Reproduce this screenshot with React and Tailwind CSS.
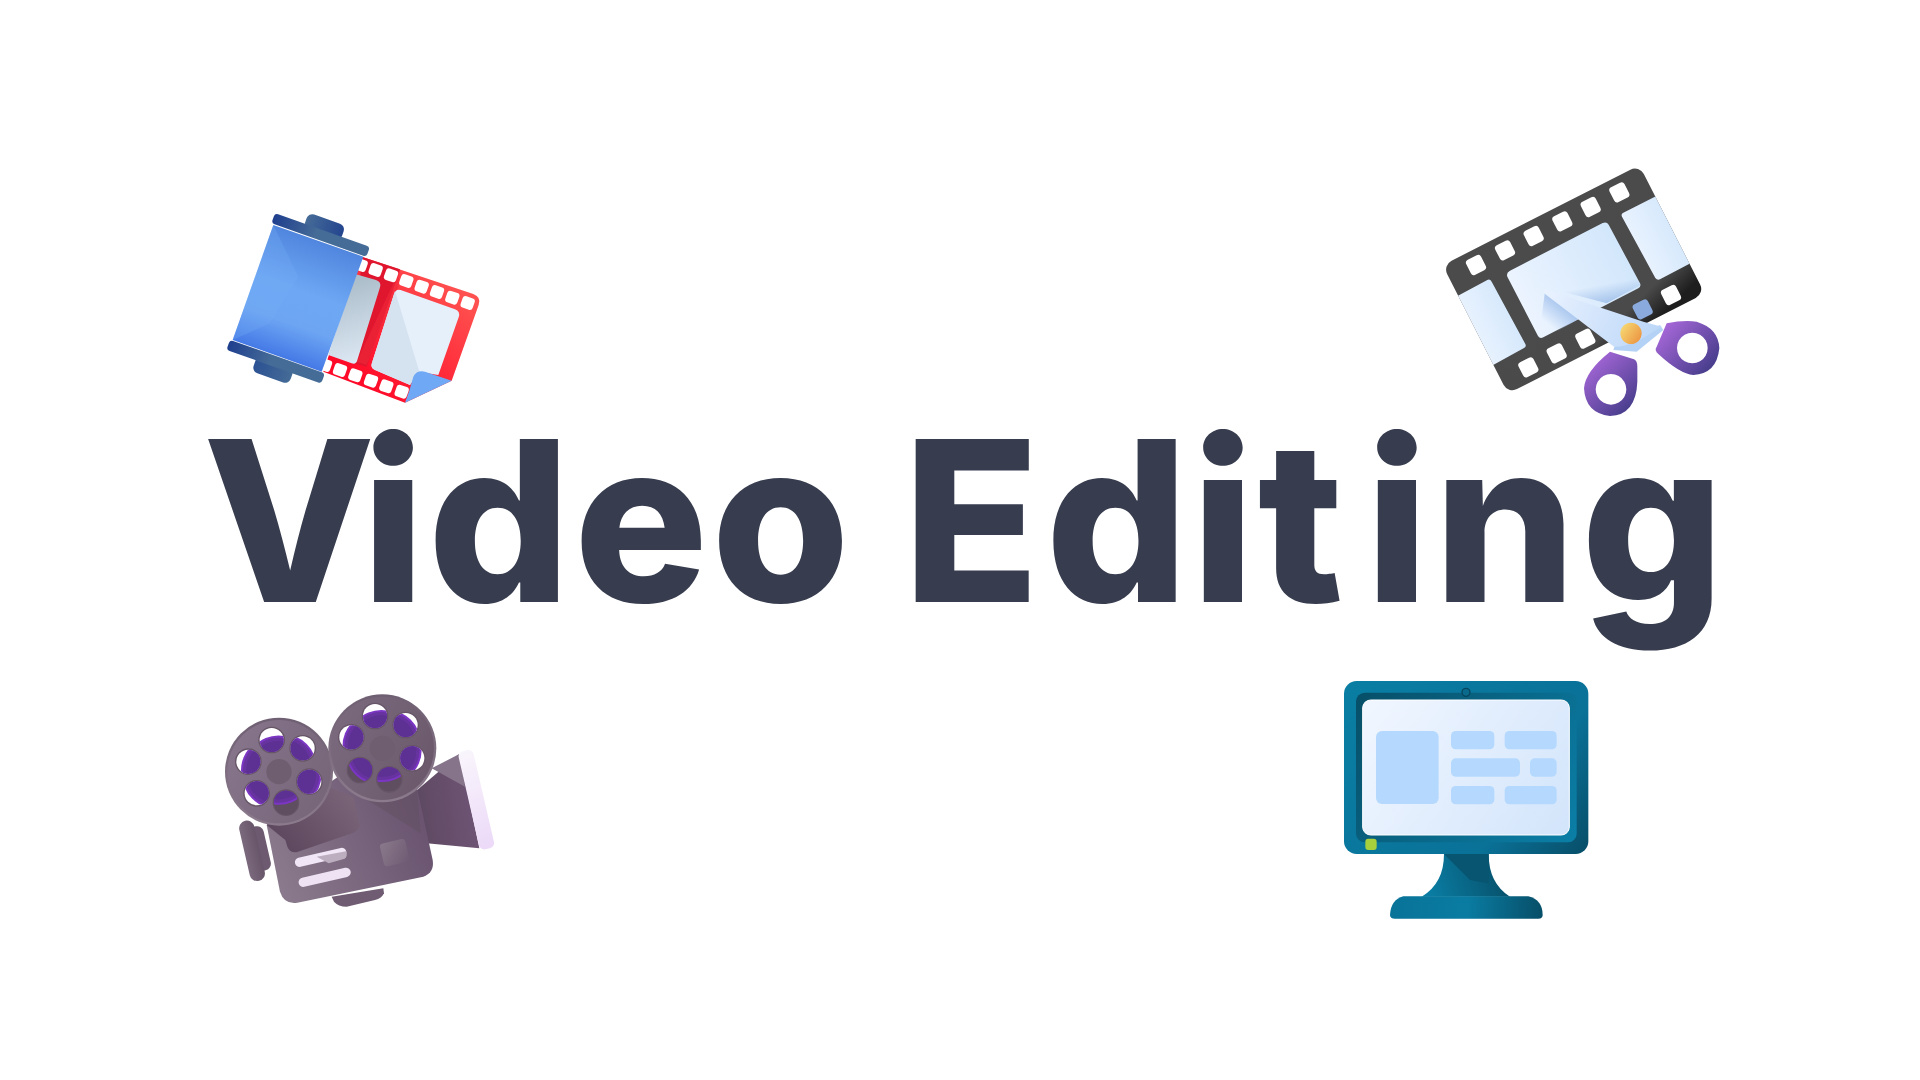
import React from 'react';

// the film roll, top left
function FilmRoll() {
  const topHoles = [[497, 240], [543, 256], [589, 273], [635, 290], [681, 306], [727, 323], [773, 339], [452, 225]];
  const bottomHoles = [[345, 525], [390, 540], [436, 556], [483, 572], [529, 589], [575, 605]];
  return (
    <svg viewBox="0 0 870 690" className="w-[290px] h-[230px] shrink-0">
      <defs>
        <linearGradient id="rollRed" x1="780" y1="320" x2="500" y2="620" gradientUnits="userSpaceOnUse">
          <stop offset="0" stopColor="#ff5250" />
          <stop offset="1" stopColor="#ff0a28" />
        </linearGradient>
        <linearGradient id="rollBody" x1="330" y1="145" x2="205" y2="500" gradientUnits="userSpaceOnUse">
          <stop offset="0" stopColor="#4f84dd" />
          <stop offset="0.45" stopColor="#6ea8f4" />
          <stop offset="0.72" stopColor="#6da5f3" />
          <stop offset="1" stopColor="#4479e6" />
        </linearGradient>
        <linearGradient id="rollCap" x1="0" y1="0" x2="1" y2="0">
          <stop offset="0" stopColor="#1f3f8e" />
          <stop offset="0.45" stopColor="#456b97" />
          <stop offset="1" stopColor="#456b97" />
        </linearGradient>
        <linearGradient id="rollKnob" x1="0" y1="0" x2="1" y2="0">
          <stop offset="0" stopColor="#456b97" />
          <stop offset="1" stopColor="#24458f" />
        </linearGradient>
        <linearGradient id="rollKnob2" x1="0" y1="0" x2="1" y2="0">
          <stop offset="0" stopColor="#2b5193" />
          <stop offset="1" stopColor="#456b97" />
        </linearGradient>
        <linearGradient id="rollLeftFrame" x1="400" y1="290" x2="470" y2="500" gradientUnits="userSpaceOnUse">
          <stop offset="0" stopColor="#aebfcc" />
          <stop offset="1" stopColor="#dbe7f3" />
        </linearGradient>
      </defs>
      <path d="M455 200 L790 312 Q815 322 806 345 L725 572 L585 638 L340 545 Z" fill="url(#rollRed)" />
      <path d="M455 200 L570 238 L470 530 L432 520 Z" fill="#e0162f" />
      <path d="M570 238 L565 290 L470 525 L440 515 Z" fill="#f0283a" opacity="0.6" />
      <path d="M435 252 L498 270 Q515 276 510 292 L442 510 Q438 525 425 520 L355 495 Z" fill="url(#rollLeftFrame)" />
      <path d="M572 300 L735 358 Q752 364 746 382 L685 555 L625 545 L600 585 L495 540 Q480 532 486 518 L552 312 Q558 296 572 300 Z" fill="#e6f0fb" />
      <path d="M555 303 L628 545 L600 585 L495 540 Q480 532 486 518 Z" fill="#d5e2f0" />
      {topHoles.concat(bottomHoles).map(([x, y]) => (
        <rect key={`${x}-${y}`} x={x - 19} y={y - 18} width="38" height="36" rx="9" fill="#fff" transform={`rotate(19.5 ${x} ${y})`} />
      ))}
      <path d="M585 638 Q600 600 610 560 Q620 540 645 545 L725 572 Z" fill="#6fa8f5" />
      <rect x="284" y="86" width="118" height="50" rx="18" fill="url(#rollKnob)" transform="rotate(19.5 343 111)" />
      <rect x="130" y="515" width="118" height="50" rx="18" fill="url(#rollKnob2)" transform="rotate(19.5 189 540)" />
      <path d="M190 105 L460 200 L335 545 L68 450 Z" fill="url(#rollBody)" />
      <path d="M190 105 L265 260 L180 400 L68 450 Z" fill="#75adf6" opacity="0.3" />
      <rect x="181" y="119" width="302" height="32" rx="10" fill="url(#rollCap)" transform="rotate(19.5 332 135)" />
      <rect x="46" y="499" width="302" height="32" rx="10" fill="url(#rollCap)" transform="rotate(19.5 197 515)" />
    </svg>
  );
}

// film strip with the scissors across it, top right
function FilmCut() {
  const holes = [[138, 345], [225, 301], [311, 258], [397, 214], [482, 171], [568, 127], [295, 652], [380, 610], [466, 566], [723, 435]];
  return (
    <svg viewBox="0 0 900 810" className="w-[300px] h-[270px] shrink-0">
      <defs>
        <clipPath id="cutClip">
          <rect x="100" y="172" width="662" height="432" rx="30" transform="rotate(-27 431 388)" />
        </clipPath>
        <linearGradient id="cutStrip" x1="380" y1="250" x2="500" y2="640" gradientUnits="userSpaceOnUse">
          <stop offset="0" stopColor="#4b4b4b" />
          <stop offset="0.8" stopColor="#4a4a4a" />
          <stop offset="1" stopColor="#1e1e1e" />
        </linearGradient>
        <linearGradient id="cutFrame" x1="240" y1="480" x2="620" y2="280" gradientUnits="userSpaceOnUse">
          <stop offset="0" stopColor="#eef5ff" />
          <stop offset="1" stopColor="#cfe5fb" />
        </linearGradient>
        <linearGradient id="cutSide" x1="100" y1="560" x2="280" y2="470" gradientUnits="userSpaceOnUse">
          <stop offset="0" stopColor="#eef5ff" />
          <stop offset="1" stopColor="#cfe5fb" />
        </linearGradient>
        <linearGradient id="cutSide2" x1="590" y1="300" x2="770" y2="210" gradientUnits="userSpaceOnUse">
          <stop offset="0" stopColor="#eef5ff" />
          <stop offset="1" stopColor="#cfe5fb" />
        </linearGradient>
        <linearGradient id="cutShade" x1="510" y1="405" x2="522" y2="470" gradientUnits="userSpaceOnUse">
          <stop offset="0" stopColor="#9dbde8" stopOpacity="0" />
          <stop offset="1" stopColor="#9dbde8" />
        </linearGradient>
        <linearGradient id="cutShade2" x1="440" y1="500" x2="395" y2="555" gradientUnits="userSpaceOnUse">
          <stop offset="0" stopColor="#a9c6ee" />
          <stop offset="1" stopColor="#a9c6ee" stopOpacity="0" />
        </linearGradient>
        <linearGradient id="cutBlade" x1="340" y1="420" x2="680" y2="560" gradientUnits="userSpaceOnUse">
          <stop offset="0" stopColor="#eaf2ff" />
          <stop offset="1" stopColor="#bcd7f8" />
        </linearGradient>
        <linearGradient id="cutHandle" x1="700" y1="530" x2="850" y2="670" gradientUnits="userSpaceOnUse">
          <stop offset="0" stopColor="#a667d8" />
          <stop offset="1" stopColor="#403a86" />
        </linearGradient>
        <linearGradient id="cutHandle2" x1="470" y1="640" x2="610" y2="790" gradientUnits="userSpaceOnUse">
          <stop offset="0" stopColor="#a667d8" />
          <stop offset="1" stopColor="#403a86" />
        </linearGradient>
        <linearGradient id="cutPin" x1="575" y1="530" x2="635" y2="570" gradientUnits="userSpaceOnUse">
          <stop offset="0" stopColor="#f6d771" />
          <stop offset="1" stopColor="#ec9340" />
        </linearGradient>
      </defs>
      <rect x="100" y="172" width="662" height="432" rx="30" fill="url(#cutStrip)" transform="rotate(-27 431 388)" />
      <g clipPath="url(#cutClip)">
        <path d="M70 445 L172 390 Q180 386 185 395 L286 582 Q290 590 282 594 L180 650 Z" fill="url(#cutSide)" />
        <path d="M685 135 L790 335 L690 388 Q682 392 676 384 L576 200 Q572 192 580 188 Z" fill="url(#cutSide2)" />
      </g>
      <path d="M240 362 L518 219 Q530 214 536 224 L630 400 Q634 410 625 415 L340 562 Q330 568 324 558 L232 380 Q228 368 240 362 Z" fill="url(#cutFrame)" />
      <path d="M400 425 L622 385 L632 405 L530 460 Z" fill="url(#cutShade)" />
      <path d="M345 425 L450 505 L350 562 L330 535 Z" fill="url(#cutShade2)" />
      {holes.map(([x, y]) => (
        <rect key={`${x}-${y}`} x={x - 25} y={y - 25} width="50" height="50" rx="10" fill="#fff" transform={`rotate(-27 ${x} ${y})`} />
      ))}
      <rect x="613" y="453" width="50" height="50" rx="10" fill="#8aa9dc" transform="rotate(-27 638 478)" />
      <path d="M555 585 L690 525 L700 540 L620 605 L550 600 Z" fill="#b4d2f5" />
      <path d="M345 418 Q336 422 345 432 L552 590 Q575 592 620 575 L695 530 L640 515 Z" fill="url(#cutBlade)" />
      <circle cx="603" cy="550" r="32" fill="url(#cutPin)" />
      <path fillRule="evenodd" d="M710 520 Q760 510 800 515 Q866 535 868 595 Q860 672 790 675 Q750 672 685 612 Q672 600 680 590 Z M787 548 a46 46 0 1 0 0.01 0 Z" fill="url(#cutHandle)" />
      <path fillRule="evenodd" d="M540 605 L612 628 Q622 632 622 650 L622 695 Q618 795 540 798 Q466 790 462 715 Q465 665 540 605 Z M543 672 a46 46 0 1 0 0.01 0 Z" fill="url(#cutHandle2)" />
    </svg>
  );
}

// holes are [x, y, how far the film disc stops short of the hole's outer edge, background]
function Reel({ id, cx, cy, holes }) {
  return (
    <g>
      <circle cx={cx} cy={cy} r="162" fill="url(#camReelEdge)" />
      <circle cx={cx} cy={cy} r="155" fill="url(#camReel)" />
      {holes.map(([x, y, inset, bg], i) => {
        const dist = Math.hypot(cx - x, cy - y);
        const shift = 100 - 36 + inset;
        const discX = x + ((cx - x) / dist) * shift;
        const discY = y + ((cy - y) / dist) * shift;
        return (
          <g key={x}>
            <circle cx={x} cy={y} r="40" fill="#665566" />
            <clipPath id={`${id}${i}`}><circle cx={x} cy={y} r="36" /></clipPath>
            <g clipPath={`url(#${id}${i})`}>
              <rect x={x - 40} y={y - 40} width="80" height="80" fill={bg} />
              <circle cx={discX} cy={discY} r="100" fill="#7c36c4" />
              <circle cx={discX} cy={discY} r="94" fill="#66339f" />
              <circle cx={discX} cy={discY} r="84" fill="#5d3093" />
            </g>
          </g>
        );
      })}
      <circle cx={cx} cy={cy} r="38" fill="#6f5e70" />
    </g>
  );
}

// the old cine camera, bottom left
function CineCamera() {
  const leftHoles = [
    [185, 180, 25, '#fff'], [278, 205, 18, '#fff'], [298, 305, 3, '#fff'],
    [228, 368, 32, '#5f4d60'], [140, 340, 15, '#fff'], [115, 245, 18, '#fff'],
  ];
  const rightHoles = [
    [495, 108, 20, '#fff'], [587, 135, 14, '#fff'], [607, 235, 12, '#fff'],
    [538, 298, 30, '#5f4d60'], [450, 270, 16, '#5f4d60'], [424, 172, 14, '#fff'],
  ];
  return (
    <svg viewBox="0 0 900 720" className="w-[300px] h-[240px] shrink-0">
      <defs>
        <linearGradient id="camBody" x1="200" y1="620" x2="640" y2="430" gradientUnits="userSpaceOnUse">
          <stop offset="0" stopColor="#8b7a8d" />
          <stop offset="1" stopColor="#6a5470" />
        </linearGradient>
        <linearGradient id="camShadow" x1="430" y1="340" x2="240" y2="500" gradientUnits="userSpaceOnUse">
          <stop offset="0" stopColor="#7a6579" />
          <stop offset="1" stopColor="#5f4960" />
        </linearGradient>
        <linearGradient id="camLens" x1="640" y1="420" x2="800" y2="400" gradientUnits="userSpaceOnUse">
          <stop offset="0" stopColor="#5f4a63" />
          <stop offset="1" stopColor="#6f5475" />
        </linearGradient>
        <linearGradient id="camRim" x1="790" y1="210" x2="820" y2="500" gradientUnits="userSpaceOnUse">
          <stop offset="0" stopColor="#f9f5fc" />
          <stop offset="1" stopColor="#ecdaf8" />
        </linearGradient>
        <linearGradient id="camReel" x1="100" y1="150" x2="600" y2="380" gradientUnits="userSpaceOnUse">
          <stop offset="0" stopColor="#85748a" />
          <stop offset="1" stopColor="#6c5a6c" />
        </linearGradient>
        <linearGradient id="camReelEdge" x1="0" y1="0" x2="0" y2="1">
          <stop offset="0" stopColor="#6f5f72" />
          <stop offset="1" stopColor="#8c7b8d" />
        </linearGradient>
        <linearGradient id="camPad" x1="510" y1="490" x2="600" y2="560" gradientUnits="userSpaceOnUse">
          <stop offset="0" stopColor="#8a798c" />
          <stop offset="1" stopColor="#6c5770" />
        </linearGradient>
        <linearGradient id="camHandle" x1="90" y1="500" x2="170" y2="500" gradientUnits="userSpaceOnUse">
          <stop offset="0" stopColor="#806e82" />
          <stop offset="1" stopColor="#5f4c62" />
        </linearGradient>
      </defs>
      <rect x="126" y="438" width="46" height="135" rx="20" fill="#6d5a70" transform="rotate(-13 149 505)" />
      <rect x="103" y="420" width="46" height="185" rx="23" fill="url(#camHandle)" transform="rotate(-13 126 512)" />
      <path d="M365 650 L520 625 L522 640 Q515 655 495 660 L410 680 Q385 680 372 665 Z" fill="#6f5b72" />
      <path d="M610 340 L748 222 L808 505 L650 490 Z" fill="url(#camLens)" />
      <path d="M665 265 L748 222 L765 320 Z" fill="#86758a" />
      <rect x="776" y="208" width="46" height="302" rx="16" fill="url(#camRim)" transform="rotate(-13 799 359)" />
      <path d="M170 435 L400 280 L620 320 L668 540 Q674 578 640 590 L262 668 Q222 674 210 635 Z" fill="url(#camBody)" />
      <path d="M170 435 L300 300 L430 350 L448 430 Q450 450 430 458 L262 516 Q240 520 232 500 L226 480 Z" fill="url(#camShadow)" />
      <path d="M440 340 L620 320 L632 460 Z" fill="#62505f" opacity="0.45" />
      <rect x="515" y="483" width="78" height="70" rx="10" fill="url(#camPad)" transform="rotate(-13 554 518)" />
      <rect x="253" y="518" width="158" height="28" rx="14" fill="#f1e6f5" transform="rotate(-13 332 532)" />
      <rect x="264" y="578" width="160" height="28" rx="14" fill="#eee2f3" transform="rotate(-13 344 592)" />
      <path d="M320 530 L408 514 Q414 530 404 536 L356 550 Z" fill="#bcaebf" />
      <Reel id="camHoleL" cx={207} cy={275} holes={leftHoles} />
      <Reel id="camHoleR" cx={517} cy={205} holes={rightHoles} />
    </svg>
  );
}

// monitor, bottom right
function Monitor() {
  const blocks = [
    [138, 183, 188, 219, 18], [363, 183, 130, 55, 14], [524, 183, 156, 55, 14], [363, 265, 207, 55, 14],
    [600, 265, 80, 55, 14], [363, 348, 130, 55, 14], [524, 348, 156, 55, 14],
  ];
  return (
    <svg viewBox="0 0 840 780" className="w-[280px] h-[260px] shrink-0">
      <defs>
        <linearGradient id="monOuter" x1="100" y1="60" x2="760" y2="540" gradientUnits="userSpaceOnUse">
          <stop offset="0" stopColor="#0a7da3" />
          <stop offset="0.7" stopColor="#0a7197" />
          <stop offset="1" stopColor="#08506b" />
        </linearGradient>
        <linearGradient id="monInner" x1="100" y1="80" x2="720" y2="510" gradientUnits="userSpaceOnUse">
          <stop offset="0" stopColor="#07506a" />
          <stop offset="1" stopColor="#0b7ea6" />
        </linearGradient>
        <linearGradient id="monScreen" x1="120" y1="100" x2="700" y2="490" gradientUnits="userSpaceOnUse">
          <stop offset="0" stopColor="#f0f6ff" />
          <stop offset="1" stopColor="#d3e5fb" />
        </linearGradient>
        <linearGradient id="monStand" x1="300" y1="660" x2="520" y2="590" gradientUnits="userSpaceOnUse">
          <stop offset="0" stopColor="#0a7ca2" />
          <stop offset="1" stopColor="#07506a" />
        </linearGradient>
        <linearGradient id="monBase" x1="190" y1="700" x2="630" y2="720" gradientUnits="userSpaceOnUse">
          <stop offset="0" stopColor="#097398" />
          <stop offset="0.5" stopColor="#0a7ca2" />
          <stop offset="1" stopColor="#07506a" />
        </linearGradient>
      </defs>
      <path d="M342 552 L476 552 Q476 640 540 680 L275 680 Q342 640 342 552 Z" fill="url(#monStand)" />
      <path d="M342 552 L476 552 L476 640 L420 630 Z" fill="#075570" />
      <path d="M220 679 L595 679 Q638 690 638 735 Q638 746 625 746 L195 746 Q180 746 180 735 Q182 690 220 679 Z" fill="url(#monBase)" />
      <rect x="42" y="33" width="733" height="519" rx="38" fill="url(#monOuter)" />
      <rect x="78" y="68" width="662" height="449" rx="26" fill="url(#monInner)" />
      <circle cx="408" cy="67" r="12" fill="#0a6a8c" stroke="#07465e" strokeWidth="4" />
      <rect x="98" y="90" width="620" height="405" rx="24" fill="url(#monScreen)" stroke="#ffffff" strokeWidth="3" />
      {blocks.map(([x, y, w, h, r]) => (
        <rect key={`${x}-${y}`} x={x} y={y} width={w} height={h} rx={r} fill="#b5d9fe" />
      ))}
      <rect x="106" y="506" width="34" height="34" rx="9" fill="#a7d03c" />
    </svg>
  );
}

export default function App() {
  return (
    <div className="w-full h-[1080px] bg-white overflow-hidden pt-[150px]">
      <div className="flex items-start h-[270px] pl-[210px]">
        <div className="mt-[40px]"><FilmRoll /></div>
        <div className="ml-[930px]"><FilmCut /></div>
      </div>
      {/* letter spacing is set per run so the glyphs land where the reference has them */}
      <h1 className="flex h-[250px] pl-[203px] gap-[50px] whitespace-nowrap font-[850] text-[#373d4f] text-[224px] leading-[201px] [font-family:Inter,sans-serif]">
        <span className="tracking-[3px]"><span className="tracking-[-14px]">V</span>ideo</span>
        <span className="tracking-[3px]"><span className="tracking-[6px]">E</span>di<span className="tracking-[22px]">t</span><span className="tracking-[5px]">ing</span></span>
      </h1>
      <div className="flex items-start pl-[210px]">
        <div className="mt-[10px]"><CineCamera /></div>
        <div className="ml-[820px]"><Monitor /></div>
      </div>
    </div>
  );
}
